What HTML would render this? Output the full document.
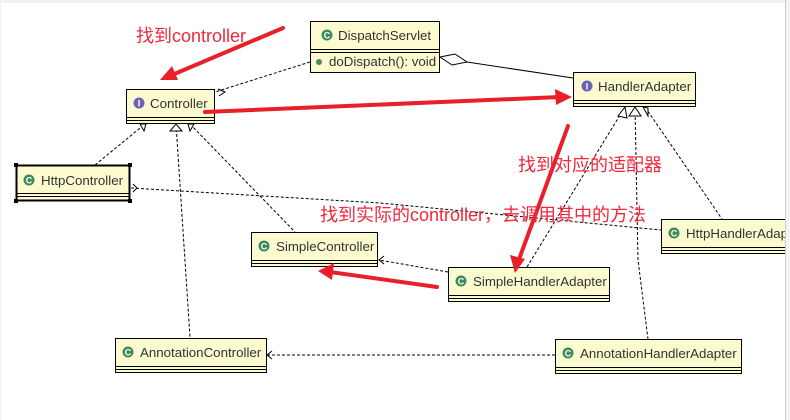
<!DOCTYPE html>
<html><head><meta charset="utf-8"><style>
html,body{margin:0;padding:0;background:#fff;}
svg{display:block}
.t{font-family:"Liberation Sans","Noto Sans CJK SC",sans-serif;font-size:13.3px;fill:#333}
.r{font-family:"Liberation Sans","Noto Sans CJK SC",sans-serif;font-size:18px;fill:#f0283c}
</style></head><body>
<svg width="790" height="420" viewBox="0 0 790 420" xmlns="http://www.w3.org/2000/svg">
<defs>
<g id="gi"><circle cx="0" cy="0" r="5.5" fill="#6a63b5"/><text x="0" y="3.5" text-anchor="middle" font-family="Liberation Sans" font-weight="bold" font-size="9" fill="#fff">I</text></g>
<g id="gc"><circle cx="0" cy="0" r="5.5" fill="#3f8a5a"/><text x="0" y="3.5" text-anchor="middle" font-family="Liberation Sans" font-weight="bold" font-size="9" fill="#fff">C</text></g>
</defs>
<rect x="0" y="0" width="790" height="3" fill="#eef2f8"/>
<rect x="0" y="0" width="1" height="420" fill="#eef2f8"/>

<g fill="none" stroke="#000" stroke-width="1" stroke-dasharray="3,2">
<path d="M310 62 L215 92"/>
<path d="M95 165 L145 124"/>
<path d="M176 124 L190 337"/>
<path d="M190 124 L295 232"/>
<path d="M131 188 L380 203 L661 230"/>
<path d="M448 272 L379 260"/>
<path d="M555 355 L267 355"/>
<path d="M527 267 L625 107"/>
<path d="M635 107 L638 260 L648 339"/>
<path d="M645 107 L722 219"/>
</g>
<g fill="none" stroke="#000" stroke-width="1">
<path d="M218 89 L225 92 L219 96"/>
<path d="M133 184 L137 188 L133 192"/>
<path d="M384 256 L379 260 L384 264"/>
<path d="M272 351 L267 355 L272 359"/>
<path d="M140 124 L146 124 L144 131 Z" fill="#fff"/>
<path d="M170 131 L176 124 L182 131 Z" fill="#fff"/>
<path d="M188 124 L194 124 L190 131 Z" fill="#fff"/>
<path d="M618 116 L625 107 L627 118 Z" fill="#fff"/>
<path d="M629 116 L635 107 L641 116 Z" fill="#fff"/>
<path d="M643 107 L648 108 L648 116 Z" fill="#fff"/>
<path d="M440 57 L455 54 L467 62 L452 65 Z" fill="#fff"/>
<path d="M467 62 L573 78"/>
</g>

<g stroke="#000" stroke-width="1" fill="#fbfbcf">
<rect x="310.5" y="21.5" width="129" height="51"/>
<line x1="310" y1="49.5" x2="440" y2="49.5"/><line x1="310" y1="52.5" x2="440" y2="52.5"/>
<rect x="126.5" y="89.5" width="88" height="34"/>
<line x1="126" y1="117.5" x2="215" y2="117.5"/><line x1="126" y1="120.5" x2="215" y2="120.5"/>
<rect x="573.5" y="72.5" width="122" height="34"/>
<line x1="573" y1="100.5" x2="696" y2="100.5"/><line x1="573" y1="103.5" x2="696" y2="103.5"/>
<rect x="16.5" y="165.5" width="113" height="35" stroke-width="2"/>
<line x1="16" y1="193.5" x2="130" y2="193.5"/><line x1="16" y1="196.5" x2="130" y2="196.5"/>
<rect x="251.5" y="232.5" width="126" height="34"/>
<line x1="251" y1="260.5" x2="378" y2="260.5"/><line x1="251" y1="263.5" x2="378" y2="263.5"/>
<rect x="448.5" y="267.5" width="161" height="34"/>
<line x1="448" y1="295.5" x2="610" y2="295.5"/><line x1="448" y1="298.5" x2="610" y2="298.5"/>
<rect x="661.5" y="219.5" width="130" height="34"/>
<line x1="661" y1="247.5" x2="792" y2="247.5"/><line x1="661" y1="250.5" x2="792" y2="250.5"/>
<rect x="115.5" y="338.5" width="151" height="34"/>
<line x1="115" y1="366.5" x2="267" y2="366.5"/><line x1="115" y1="369.5" x2="267" y2="369.5"/>
<rect x="555.5" y="339.5" width="186" height="34"/>
<line x1="555" y1="367.5" x2="742" y2="367.5"/><line x1="555" y1="370.5" x2="742" y2="370.5"/>
</g>
<g fill="#000"><rect x="14" y="163" width="4" height="4"/><rect x="128" y="163" width="4" height="4"/><rect x="14" y="199" width="4" height="4"/><rect x="128" y="199" width="4" height="4"/></g>

<use href="#gc" x="327" y="35"/><text class="t" x="338" y="40">DispatchServlet</text>
<circle cx="319" cy="62" r="3" fill="#4b8a63"/><text class="t" x="329" y="66">doDispatch(): void</text>
<use href="#gi" x="139" y="103"/><text class="t" x="150" y="108">Controller</text>
<use href="#gi" x="587" y="86"/><text class="t" x="598" y="91">HandlerAdapter</text>
<use href="#gc" x="29" y="180"/><text class="t" x="41" y="185">HttpController</text>
<use href="#gc" x="264" y="246"/><text class="t" x="276" y="251">SimpleController</text>
<use href="#gc" x="461" y="281"/><text class="t" x="473" y="286">SimpleHandlerAdapter</text>
<use href="#gc" x="674" y="233"/><text class="t" x="686" y="238">HttpHandlerAdapter</text>
<use href="#gc" x="128" y="352"/><text class="t" x="140" y="357">AnnotationController</text>
<use href="#gc" x="568" y="353"/><text class="t" x="580" y="358">AnnotationHandlerAdapter</text>

<rect x="786" y="0" width="4" height="420" fill="#f3f3f3"/>
<line x1="785.5" y1="0" x2="785.5" y2="420" stroke="#ccc"/>

<g stroke="#e8202a" stroke-width="4" fill="none" stroke-linecap="round">
<path d="M283 28 L172 75"/>
<path d="M205 112 L560 97"/>
<path d="M568 126 L518 262"/>
<path d="M437 287 L330 272"/>
</g>
<g fill="#e8202a">
<path d="M160 80 L172 66 L178 80 Z"/>
<path d="M572 97 L555 89 L556 105 Z"/>
<path d="M515 273 L510 255 L525 259 Z"/>
<path d="M318 271 L334 263 L332 280 Z"/>
</g>
<text class="r" x="136" y="42">找到controller</text>
<text class="r" x="518" y="171">找到对应的适配器</text>
<text class="r" x="320" y="221">找到实际的controller，去调用其中的方法</text>
</svg>
</body></html>
